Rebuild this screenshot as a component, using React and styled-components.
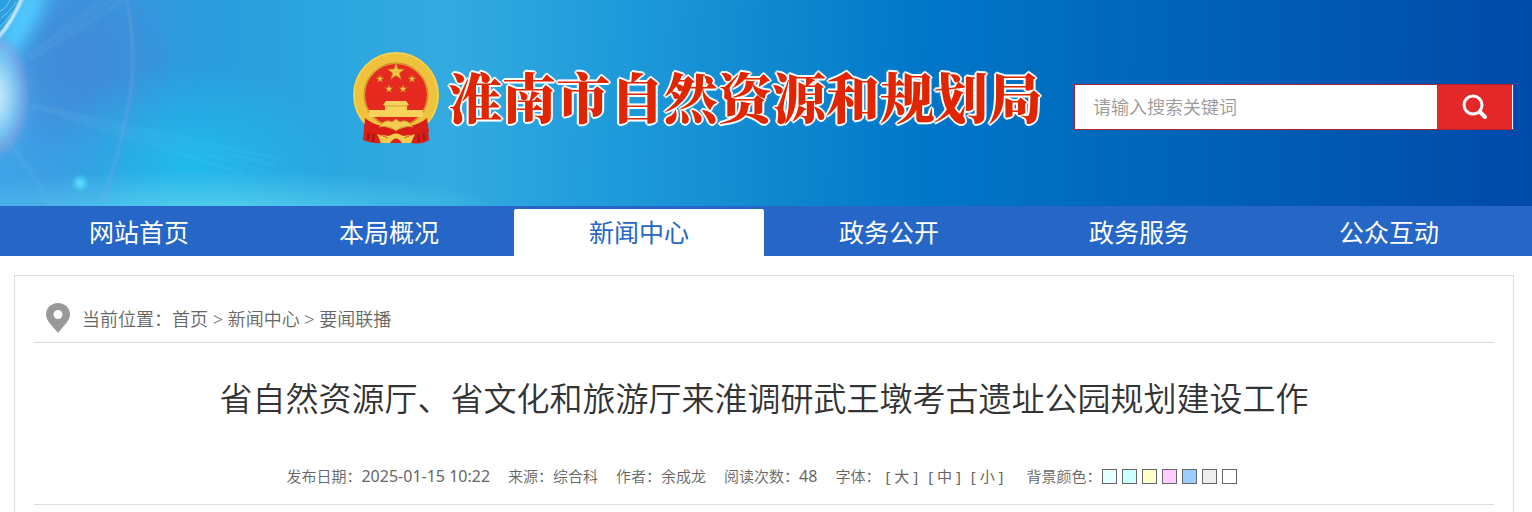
import { useState } from "react";
import styled, { createGlobalStyle } from "styled-components";

const GlobalStyle = createGlobalStyle`
  * {
    box-sizing: border-box;
  }
  body {
    margin: 0;
    background: #fff;
    color: #666;
    font-family: "Noto Sans", "Noto Sans CJK SC", sans-serif;
  }
  button, input {
    font-family: inherit;
  }
  a {
    color: inherit;
    text-decoration: none;
  }
`;

const Header = styled.header`
  position: relative;
  height: 206px;
  padding: 0 18px 0 352px;
  display: flex;
  align-items: center;
  justify-content: space-between;
  background: linear-gradient(
    91deg,
    #3fa5e8 0%,
    #3a98df 6%,
    #2a9cdd 13%,
    #2ba6df 22%,
    #34abe0 29%,
    #1f9bdb 40%,
    #0f87ce 51%,
    #0076c9 61%,
    #006cbf 70%,
    #005cb5 83%,
    #004aaa 100%
  );
`;

const Sky = styled.svg`
  position: absolute;
  left: 0;
  top: 0;
  width: 700px;
  height: 206px;
`;

const Brand = styled.a`
  position: relative;
  display: flex;
  align-items: center;
  gap: 8px;
  margin-top: -8px;
`;

const BrandName = styled.span`
  color: #df2600;
  font-family: "Noto Serif CJK SC", "Noto Sans CJK SC", serif;
  font-size: 54px;
  font-weight: 900;
  line-height: 72px;
  margin-top: -6px;
  white-space: nowrap;
  text-shadow: 2px 0 #fff, -2px 0 #fff, 0 2px #fff, 0 -2px #fff, 1px 1px #fff,
    -1px -1px #fff, 1px -1px #fff, -1px 1px #fff, 0 0 3px #fff;
`;

const SearchForm = styled.form`
  position: relative;
  display: flex;
  width: 440px;
  height: 46px;
  margin-top: 8px;
  border: 1px solid #b3202f;
  background: #fff;
`;

const SearchInput = styled.input`
  flex: 1;
  min-width: 0;
  border: 0;
  padding: 0 18px;
  background: #fff;
  font-size: 18px;
  outline: none;
  &::placeholder {
    color: #999;
    font-weight: 350;
  }
`;

const SearchButton = styled.button`
  width: 75px;
  margin-right: 1px;
  border: 0;
  padding: 0;
  background: #e22829;
  display: flex;
  align-items: center;
  justify-content: center;
  cursor: pointer;
`;

const Nav = styled.nav`
  height: 50px;
  padding: 3px 18px 0 14px;
  display: flex;
  background: #2566c6;
`;

const NavLink = styled.a`
  flex: 0 1 250px;
  font-size: 25px;
  line-height: 47px;
  text-align: center;
  border-radius: 2px 2px 0 0;
  color: ${(props) => (props.$active ? "#2566c6" : "#fff")};
  background: ${(props) => (props.$active ? "#fff" : "transparent")};
`;

const Panel = styled.main`
  margin: 19px 18px 0 14px;
  padding: 0 19px 40px;
  border: 1px solid #ddd;
`;

const Crumbs = styled.div`
  display: flex;
  align-items: center;
  height: 67px;
  padding: 18px 12px 0;
  border-bottom: 1px solid #ddd;
  font-size: 18px;
  font-weight: 350;
`;

const CrumbText = styled.span`
  margin-left: 12px;
`;

const Title = styled.h1`
  margin: 32px 0 0;
  color: #333;
  font-size: 33px;
  font-weight: 350;
  line-height: 48px;
  text-align: center;
`;

const Meta = styled.div`
  display: flex;
  flex-wrap: wrap;
  justify-content: center;
  gap: 0 18px;
  margin-top: 28px;
  padding: 14px 0 17px;
  border-bottom: 1px solid #ddd;
  font-size: 15px;
  font-weight: 350;
  line-height: 22px;
`;

const MetaItem = styled.span`
  display: flex;
  align-items: center;
`;

const Num = styled.span`
  font-size: 16px;
  font-weight: 400;
`;

const SizeButton = styled.button`
  border: 0;
  padding: 0 5px;
  background: none;
  color: inherit;
  font-size: 15px;
  font-weight: 400;
  line-height: 22px;
  cursor: pointer;
`;

const Swatch = styled.button`
  width: 15px;
  height: 15px;
  margin-right: 5px;
  padding: 0;
  border: 1px solid #666;
  background: ${(props) => props.$color};
  cursor: pointer;
`;

const navItems = ["网站首页", "本局概况", "新闻中心", "政务公开", "政务服务", "公众互动"];

const sizes = ["大", "中", "小"];

const swatches = ["#e6ffff", "#ccffff", "#ffffcc", "#ffccff", "#99ccff", "#eeeeee", "#ffffff"];

const star = (cx, cy, r) =>
  Array.from({ length: 10 }, (_, i) => {
    const a = (Math.PI * i) / 5 - Math.PI / 2;
    const d = i % 2 ? r * 0.4 : r;
    return `${cx + d * Math.cos(a)},${cy + d * Math.sin(a)}`;
  }).join(" ");

function HeaderSky() {
  return (
    <Sky viewBox="0 0 700 206" aria-hidden="true">
      <defs>
        <radialGradient id="violet">
          <stop offset="0" stopColor="#4189d8" stopOpacity="0.9" />
          <stop offset="0.5" stopColor="#4189d8" stopOpacity="0.55" />
          <stop offset="1" stopColor="#4189d8" stopOpacity="0" />
        </radialGradient>
        <radialGradient id="cyan">
          <stop offset="0" stopColor="#1fc0ee" stopOpacity="0.85" />
          <stop offset="1" stopColor="#1fc0ee" stopOpacity="0" />
        </radialGradient>
        <radialGradient id="floor">
          <stop offset="0" stopColor="#62d8f2" stopOpacity="0.8" />
          <stop offset="1" stopColor="#62d8f2" stopOpacity="0" />
        </radialGradient>
        <radialGradient id="flare">
          <stop offset="0" stopColor="#e8fbfe" stopOpacity="0.95" />
          <stop offset="0.35" stopColor="#b8e9fa" stopOpacity="0.85" />
          <stop offset="0.65" stopColor="#84cbf4" stopOpacity="0.7" />
          <stop offset="0.85" stopColor="#8f9fe0" stopOpacity="0.5" />
          <stop offset="1" stopColor="#5f9fe0" stopOpacity="0" />
        </radialGradient>
        <radialGradient id="dot">
          <stop offset="0" stopColor="#5ce6ff" />
          <stop offset="1" stopColor="#5ce6ff" stopOpacity="0" />
        </radialGradient>
        <filter id="soft" x="-50%" y="-50%" width="200%" height="200%">
          <feGaussianBlur stdDeviation="8" />
        </filter>
        <filter id="thin" x="-20%" y="-20%" width="140%" height="140%">
          <feGaussianBlur stdDeviation="1" />
        </filter>
      </defs>
      <ellipse cx="75" cy="60" rx="110" ry="110" fill="url(#violet)" />
      <ellipse cx="190" cy="165" rx="150" ry="100" fill="url(#cyan)" />
      <ellipse cx="210" cy="212" rx="300" ry="42" fill="url(#floor)" />
      <path d="M-10 60 L22 -10 L50 -10 Q36 30 10 62Z" fill="#4fcaff" filter="url(#soft)" />
      <path d="M0 0H22Q12 22 0 37Z" fill="#2c9fe0" />
      <path
        d="M0 11Q6 9 10 0M1 18Q10 12 16 1M0 27Q7 20 12 12M0 33Q6 26 9 22"
        stroke="#8edcf8"
        strokeOpacity="0.7"
        fill="none"
      />
      <path d="M22 -2Q13 20 -2 38" stroke="#e8fbff" strokeWidth="3" fill="none" filter="url(#thin)" />
      <ellipse cx="-6" cy="96" rx="37" ry="64" fill="url(#flare)" filter="url(#soft)" opacity="0.6" />
      <ellipse cx="-6" cy="96" rx="37" ry="64" fill="url(#flare)" filter="url(#thin)" opacity="0.8" />
      <path
        d="M127 0Q140 70 124 125Q116 165 102 200"
        stroke="#8f9fe0"
        strokeOpacity="0.3"
        strokeWidth="3"
        fill="none"
        filter="url(#thin)"
      />
      <g stroke="#b5e2f8" strokeOpacity="0.08" strokeWidth="2" fill="none" filter="url(#thin)">
        <path d="M28 56L112 0M30 54L102 0M30 58L122 0M30 60L128 0" />
        <path d="M32 104L285 160M32 105L275 165M32 106L262 170M32 107L245 174" />
        <path d="M8 140L50 206M9 140L56 206" />
      </g>
      <circle cx="80" cy="183" r="9" fill="url(#dot)" />
    </Sky>
  );
}

function Emblem() {
  return (
    <svg width="88" height="94" viewBox="0 0 88 94" aria-hidden="true">
      <path d="M13 66L11 88Q20 92 28 91H60Q70 93 77 88L75 66Z" fill="#d61f18" />
      <path d="M17 73L16 88M22 78L21 90M71 73L72 88M66 78L67 90" stroke="#a81212" strokeWidth="2" />
      <circle cx="44" cy="43" r="37" fill="#e62a20" stroke="#efc23c" strokeWidth="12" />
      <circle cx="44" cy="43" r="42" fill="none" stroke="#f8dc62" strokeWidth="1" />
      <circle cx="44" cy="43" r="32" fill="none" stroke="#c98a22" strokeWidth="1" />
      <g fill="#f3c544" stroke="#b6731a" strokeWidth="0.5">
        <polygon points={star(44, 20, 9)} />
        <polygon points={star(28, 27, 4)} />
        <polygon points={star(60, 27, 4)} />
        <polygon points={star(37, 37, 4)} />
        <polygon points={star(51, 37, 4)} />
      </g>
      <path d="M34 49H54L57 53H55V58H71V65H17V58H33V53H31Z" fill="#f8d25a" />
      <path d="M32 54H56" stroke="#dc9c30" />
      <path d="M13 66Q20 72 30 74L44 78L58 74Q68 72 75 66L77 80Q60 84 44 84Q28 84 12 80Z" fill="#d91e18" />
      <path
        d="M27 75Q33 66 40 70L44 67L48 70Q55 66 61 75Q51 73 44 79Q37 73 27 75Z"
        fill="#f3cd4f"
        stroke="#c98a22"
        strokeWidth="0.7"
      />
      <path d="M25 82L35 86Q44 77 53 86L63 82L59 91H29Z" fill="#f3cd4f" />
      <path d="M38 91Q44 82 50 91Z" fill="#d91e18" />
    </svg>
  );
}

export default function App() {
  const [keyword, setKeyword] = useState("");

  return (
    <>
      <GlobalStyle />
      <Header>
        <HeaderSky />
        <Brand href="#">
          <Emblem />
          <BrandName>淮南市自然资源和规划局</BrandName>
        </Brand>
        <SearchForm onSubmit={(e) => e.preventDefault()}>
          <SearchInput
            type="text"
            aria-label="请输入搜索关键词"
            placeholder="请输入搜索关键词"
            value={keyword}
            onChange={(e) => setKeyword(e.target.value)}
          />
          <SearchButton type="submit" aria-label="搜索">
            <svg width="28" height="28" viewBox="0 0 28 28" fill="none" stroke="#fff">
              <circle cx="12" cy="12" r="9" strokeWidth="3" />
              <path d="M19 19L24 24" strokeWidth="4" strokeLinecap="round" />
            </svg>
          </SearchButton>
        </SearchForm>
      </Header>
      <Nav>
        {navItems.map((item) => (
          <NavLink key={item} href="#" $active={item === "新闻中心"}>
            {item}
          </NavLink>
        ))}
      </Nav>
      <Panel>
        <Crumbs>
          <svg width="24" height="30" viewBox="0 0 24 30" aria-hidden="true">
            <path
              fill="#999"
              fillRule="evenodd"
              d="M12 0C5 0 0 5 0 11.500C0 18 6 22 12 30C18 22 24 18 24 11.500C24 5 19 0 12 0ZM12 7A4.500 4.500 0 1 1 12 16A4.500 4.500 0 1 1 12 7Z"
            />
          </svg>
          <CrumbText>
            当前位置：<a href="#">首页</a> &gt; <a href="#">新闻中心</a> &gt; <a href="#">要闻联播</a>
          </CrumbText>
        </Crumbs>
        <Title>省自然资源厅、省文化和旅游厅来淮调研武王墩考古遗址公园规划建设工作</Title>
        <Meta>
          <MetaItem>
            发布日期：<Num>2025-01-15 10:22</Num>
          </MetaItem>
          <MetaItem>来源：综合科</MetaItem>
          <MetaItem>作者：余成龙</MetaItem>
          <MetaItem>
            阅读次数：<Num>48</Num>
          </MetaItem>
          <MetaItem>
            字体：
            {sizes.map((size) => (
              <SizeButton key={size} type="button">
                [ {size} ]
              </SizeButton>
            ))}
          </MetaItem>
          <MetaItem>
            背景颜色：
            {swatches.map((color) => (
              <Swatch key={color} type="button" aria-label={color} $color={color} />
            ))}
          </MetaItem>
        </Meta>
      </Panel>
    </>
  );
}
